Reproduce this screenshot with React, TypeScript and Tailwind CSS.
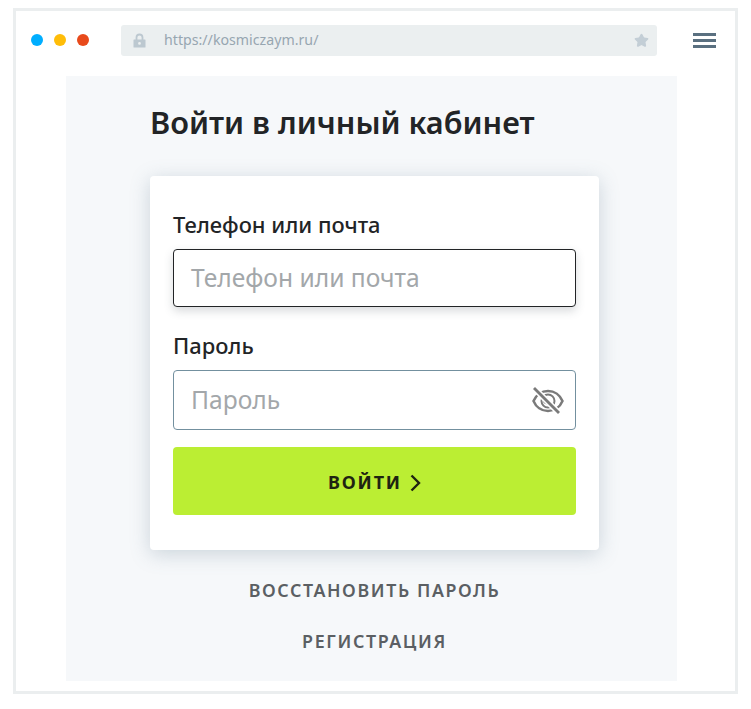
import { Star } from 'lucide-react';

const font = { fontFamily: '"Noto Sans", sans-serif' };

function LockIcon() {
  return (
    <svg width="13" height="15" viewBox="0 0 13 15" className="shrink-0">
      <path d="M3.500 7V4.500a3 3 0 0 1 6 0V7" fill="none" stroke="#bcc8d0" strokeWidth="1.800" />
      <path fillRule="evenodd" fill="#bcc8d0" d="M1 6.500h11a.5.5 0 0 1 .5.5v7a.5.5 0 0 1-.5.5H1a.5.5 0 0 1-.5-.5V7a.5.5 0 0 1 .5-.5zM6.500 9a1.400 1.400 0 1 0 0 2.800 1.400 1.400 0 0 0 0-2.800z" />
    </svg>
  );
}

function EyeSlash() {
  return (
    <svg width="32" height="28" viewBox="0 0 32 28" fill="none" stroke="#7a7a7a" strokeWidth="2.500" className="shrink-0">
      <path d="M1.500 15C4 9 9.500 5 16 5s12 4 14.500 10c-2.500 6-8 10-14.500 10S4 21 1.500 15z" />
      <circle cx="16" cy="15" r="6.500" strokeWidth="2" />
      <path d="M11 16a5 5 0 0 1 4-5l2 7a5 5 0 0 1-6-2z" fill="#7a7a7a" stroke="none" />
      <path d="M1.500 1.500L27 27" stroke="#fff" strokeWidth="6" />
      <path d="M2 2l25 25" strokeWidth="2.800" />
    </svg>
  );
}

export default function App() {
  return (
    <div className="w-[751px] h-[709px] bg-white pt-2 pl-[13px]" style={font}>
      <div className="w-[725px] h-[686px] border-[3px] border-[#ebeeef] bg-white">
        {/* browser bar */}
        <div className="flex items-center h-[48px] mt-[5px] pl-[15px]">
          <div className="flex gap-[11px] w-[90px]">
            <span className="w-[12px] h-[12px] rounded-full bg-[#00aeff]" />
            <span className="w-[12px] h-[12px] rounded-full bg-[#ffbd08]" />
            <span className="w-[12px] h-[12px] rounded-full bg-[#e84a1b]" />
          </div>
          <div className="flex items-center w-[536px] h-[31px] rounded-[3px] bg-[#ebeff0] pl-[12px] pr-[8px]">
            <LockIcon />
            <span className="ml-[18px] text-[14.200px] text-[#97a6b1]">https://kosmiczaym.ru/</span>
            <Star size={15} className="ml-auto text-[#c3ced6] fill-[#c3ced6]" />
          </div>
          <div className="ml-[36px] flex flex-col gap-[3px] w-[23px]">
            <span className="h-[3px] bg-[#5a7080]" />
            <span className="h-[3px] bg-[#5a7080]" />
            <span className="h-[3px] bg-[#5a7080]" />
          </div>
        </div>
        {/* page */}
        <div className="ml-[50px] mt-[12px] w-[611px] h-[605px] bg-[#f6f8fa] pl-[84px]">
          <h1 className="pt-[24px] text-[30.700px] leading-[44px] font-semibold text-[#222426]">Войти в личный кабинет</h1>
          <div className="mt-[32px] w-[449px] h-[374px] rounded-[4px] bg-white px-[23px] pt-[33px] shadow-[0_4px_20px_rgba(90,120,140,0.28)]">
            <label className="block text-[21.900px] leading-[32px] font-medium text-[#222426]">Телефон или почта</label>
            <div className="mt-[8px] flex items-center h-[58px] rounded-[4px] border border-[#222426] bg-white pl-[17px] pt-[1px] shadow-[0_4px_10px_rgba(60,70,80,0.2)]">
              <span className="text-[24.600px] text-[#a3a7aa]">Телефон или почта</span>
            </div>
            <label className="block mt-[23px] text-[21.900px] leading-[32px] font-medium text-[#222426]">Пароль</label>
            <div className="mt-[8px] flex items-center h-[60px] rounded-[4px] border border-[#73909f] bg-white pl-[17px] pr-[11px]">
              <span className="text-[24.600px] text-[#a3a7aa]">Пароль</span>
              <span className="ml-auto"><EyeSlash /></span>
            </div>
            <button className="mt-[17px] flex w-full h-[68px] pt-[3px] items-center justify-center gap-[8px] rounded-[4px] bg-[#bbee33] text-[18px] font-bold tracking-[0.1em] text-[#1f2411]">
              ВОЙТИ
              <svg width="11" height="18" viewBox="0 0 11 18" fill="none" stroke="#1f2411" strokeWidth="2.400"><path d="M1.500 1.500L9 9l-7.500 7.500" /></svg>
            </button>
          </div>
          <div className="w-[449px] flex flex-col items-center text-[17.800px] font-semibold tracking-[0.09em] text-[#5b5f63]">
            <a className="mt-[25px] leading-[30px]">ВОССТАНОВИТЬ ПАРОЛЬ</a>
            <a className="mt-[21px] leading-[30px]">РЕГИСТРАЦИЯ</a>
          </div>
        </div>
      </div>
    </div>
  );
}
